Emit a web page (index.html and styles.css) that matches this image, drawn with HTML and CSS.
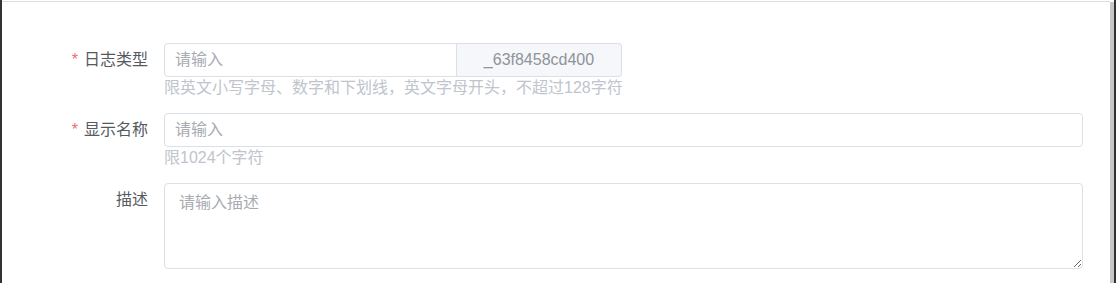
FILE: index.html
```html
<!DOCTYPE html>
<html lang="zh-CN">
<head>
    <meta charset="UTF-8">
    <meta name="viewport" content="width=device-width, initial-scale=1.0">
    <title>新建日志类型</title>
    <link rel="stylesheet" href="styles.css">
</head>
<body>
    <div class="page">
        <div class="dialog">
            <form class="form">
                <div class="form-item">
                    <label class="form-label required">日志类型</label>
                    <div class="form-content">
                        <div class="input-group">
                            <input type="text" class="input input-short" placeholder="请输入">
                            <div class="input-append">_63f8458cd400</div>
                        </div>
                        <div class="form-help">限英文小写字母、数字和下划线，英文字母开头，不超过128字符</div>
                    </div>
                </div>

                <div class="form-item">
                    <label class="form-label required">显示名称</label>
                    <div class="form-content">
                        <input type="text" class="input" placeholder="请输入">
                        <div class="form-help">限1024个字符</div>
                    </div>
                </div>

                <div class="form-item">
                    <label class="form-label">描述</label>
                    <div class="form-content">
                        <textarea class="textarea" placeholder="请输入描述"></textarea>
                    </div>
                </div>
            </form>

            <div class="watermark">
                <span class="wm wm-1">chensx<br>20250117 14:16:59</span>
                <span class="wm wm-2">chensx<br>20250117 14:16:59</span>
                <span class="wm wm-3">chensx<br>20250117 14:16:59</span>
            </div>
        </div>
        <div class="scrollbar"></div>
    </div>
</body>
</html>
```

FILE: styles.css
```css
:root {
    --border: #dcdfe6;
    --label: #606266;
    --placeholder: #a8abb2;
    --help: #c0c4cc;
    --danger: #f56c6c;
    --fill: #f5f7fa;
    --frame: #333333;
}

* {
    margin: 0;
    padding: 0;
    box-sizing: border-box;
    font-family: "Liberation Sans", "Noto Sans CJK SC", sans-serif;
}

html, body {
    height: 100%;
    background-color: #ffffff;
}

.page {
    display: flex;
    height: 283px;
    border-left: 2px solid var(--frame);
    border-right: 2px solid var(--frame);
    padding-top: 1px;
    overflow: hidden;
}

.dialog {
    flex: 1;
    position: relative;
    border-top: 1px solid #dcdcdc;
    overflow: hidden;
}

.scrollbar {
    width: 4px;
    margin-top: 1px;
    background-color: #c8c8c8;
}

.form {
    position: relative;
    z-index: 1;
    padding: 41px 27px 0 32px;
}

.form-item {
    display: flex;
    margin-bottom: 14px;
}

.form-label {
    flex: 0 0 130px;
    padding-right: 16px;
    text-align: right;
    font-size: 16px;
    line-height: 34px;
    color: #555a61;
}

.form-label.required::before {
    content: "*";
    color: var(--danger);
    margin-right: 6px;
}

.form-content {
    flex: 1;
    min-width: 0;
}

.input-group {
    display: flex;
    width: 458px;
}

.input {
    display: block;
    width: 100%;
    height: 34px;
    padding: 0 10px;
    border: 1px solid var(--border);
    border-radius: 4px;
    font-size: 16px;
    color: var(--label);
    background-color: transparent;
    outline: none;
}

.input::placeholder,
.textarea::placeholder {
    color: var(--placeholder);
}

.input-short {
    width: 293px;
    border-radius: 4px 0 0 4px;
}

.input-append {
    flex: 1;
    height: 34px;
    line-height: 32px;
    text-align: center;
    font-size: 16px;
    color: #909399;
    background-color: var(--fill);
    border: 1px solid var(--border);
    border-left: none;
    border-radius: 0 4px 4px 0;
}

.form-help {
    font-size: 16px;
    line-height: 22px;
    color: var(--help);
}

.textarea {
    display: block;
    width: 100%;
    height: 86px;
    padding: 7px 14px;
    border: 1px solid var(--border);
    border-radius: 4px;
    font-size: 16px;
    line-height: 24px;
    color: var(--label);
    background-color: transparent;
    outline: none;
    resize: vertical;
}

.watermark {
    position: absolute;
    inset: 0;
    pointer-events: none;
}

.wm {
    position: absolute;
    font-size: 28px;
    font-weight: bold;
    line-height: 32px;
    color: rgba(0, 0, 0, 0.016);
    white-space: nowrap;
    transform: rotate(-15deg);
    transform-origin: left top;
}

.wm-1 {
    left: 840px;
    top: 70px;
}

.wm-2 {
    left: 360px;
    top: 180px;
}

.wm-3 {
    left: 20px;
    top: 80px;
}
```
